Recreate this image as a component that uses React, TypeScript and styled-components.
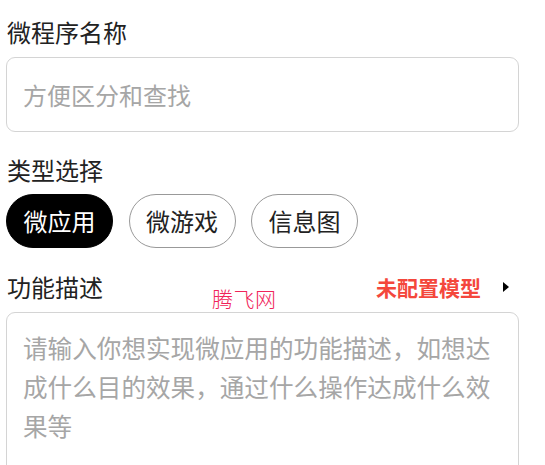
import styled, { createGlobalStyle } from 'styled-components'

const GlobalStyle = createGlobalStyle`
  html, body {
    margin: 0;
    padding: 0;
    background: #ffffff;
    overflow: hidden;
  }
  * {
    box-sizing: border-box;
  }
`

const Page = styled.div`
  width: 545px;
  height: 465px;
  overflow: hidden;
  padding: 15px 26px 0 6px;
  font-family: 'Noto Sans CJK SC', 'Noto Sans', sans-serif;
  color: #222;
`

const Label = styled.div<{ $gap?: number }>`
  font-size: 24px;
  line-height: 34px;
  height: 34px;
  margin-top: ${(p) => p.$gap ?? 0}px;
  padding-left: 1px;
`

const TextInput = styled.input`
  display: block;
  width: 100%;
  height: 75px;
  margin-top: 8px;
  padding: 0 16px;
  border: 1px solid #d4d4d4;
  border-radius: 9px;
  font-family: inherit;
  font-size: 24px;
  color: #222;
  outline: none;
  background: #fff;

  &::placeholder {
    color: #a6a6a6;
  }
`

const ChipRow = styled.div`
  display: flex;
  gap: 15.5px;
  margin-top: 7px;
`

const Chip = styled.button<{ $active?: boolean }>`
  height: 54px;
  padding: 0 16.5px;
  border-radius: 27px;
  border: 1.5px solid ${(p) => (p.$active ? '#000' : '#999')};
  background: ${(p) => (p.$active ? '#000' : '#fff')};
  color: ${(p) => (p.$active ? '#fff' : '#222')};
  font-family: inherit;
  font-size: 24px;
  line-height: 1;
  cursor: pointer;
`

const HeaderRow = styled.div`
  position: relative;
  display: flex;
  align-items: center;
  justify-content: space-between;
  height: 34px;
  margin-top: 22px;
`

const HeaderLabel = styled.span`
  font-size: 24px;
  line-height: 34px;
  padding-left: 1px;
`

const ModelLink = styled.div`
  display: flex;
  align-items: center;
  gap: 22px;
  margin-right: 10px;
  color: #f4473c;
  font-size: 21px;
  font-weight: 700;
  cursor: pointer;
`

const Caret = styled.span`
  width: 0;
  height: 0;
  border-top: 5px solid transparent;
  border-bottom: 5px solid transparent;
  border-left: 6px solid #000;
`

const Watermark = styled.span`
  position: absolute;
  left: 206px;
  top: 18px;
  font-family: 'Noto Sans CJK SC', serif;
  font-size: 21px;
  font-weight: 300;
  letter-spacing: 0.5px;
  line-height: 1;
  color: #f0245a;
  pointer-events: none;
`

const TextArea = styled.textarea`
  display: block;
  width: 100%;
  height: 200px;
  margin-top: 8px;
  padding: 15px 16px;
  border: 1px solid #d4d4d4;
  border-radius: 9px;
  font-family: inherit;
  font-size: 24.6px;
  line-height: 39px;
  color: #222;
  resize: none;
  outline: none;

  &::placeholder {
    color: #a6a6a6;
  }
`

export default function App() {
  return (
    <Page>
      <GlobalStyle />
      <Label>微程序名称</Label>
      <TextInput placeholder="方便区分和查找" />

      <Label $gap={21}>类型选择</Label>
      <ChipRow>
        <Chip $active>微应用</Chip>
        <Chip>微游戏</Chip>
        <Chip>信息图</Chip>
      </ChipRow>

      <HeaderRow>
        <HeaderLabel>功能描述</HeaderLabel>
        <Watermark>腾飞网</Watermark>
        <ModelLink>
          未配置模型
          <Caret />
        </ModelLink>
      </HeaderRow>
      <TextArea placeholder="请输入你想实现微应用的功能描述，如想达成什么目的效果，通过什么操作达成什么效果等" />
    </Page>
  )
}
